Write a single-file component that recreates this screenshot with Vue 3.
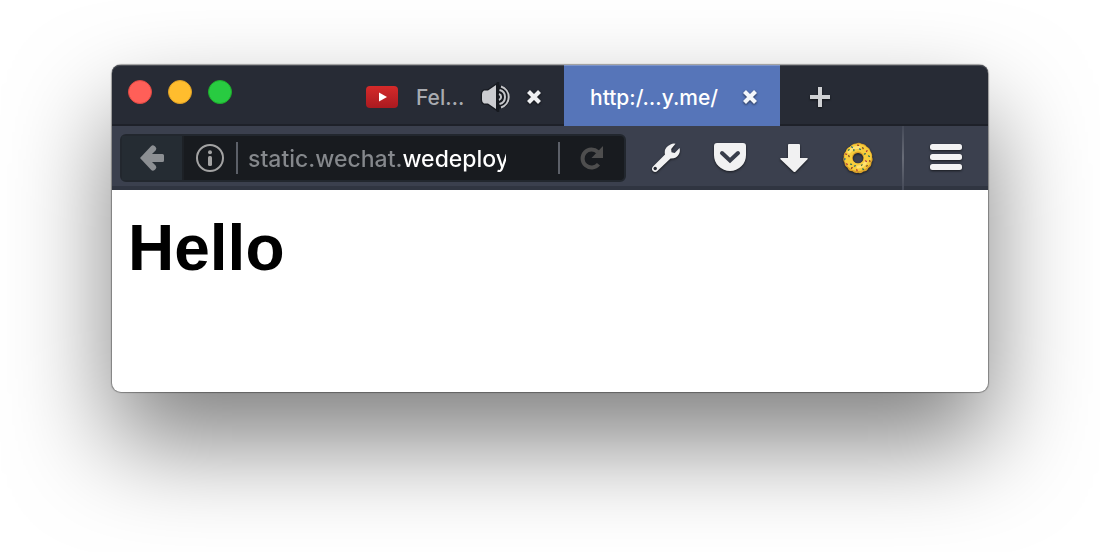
<script setup>
import { ref } from 'vue'

const address = ref('static.wechat.wedeploy.me')

// x, y, rotation and colour of each sprinkle on the donut
const sprinkles = [
  [10, 5, 40, '#2b6e88'], [16, 3, 10, '#9b3a2c'], [21, 6, 60, '#7a4a2a'], [25, 9, 120, '#b23b3b'],
  [27, 14, 30, '#2f6f5a'], [28, 19, 80, '#8a3d2a'], [25, 24, 150, '#7a4a2a'], [21, 27, 20, '#2f6f5a'],
  [15, 28, 70, '#b23b3b'], [10, 26, 130, '#8a3d2a'], [5, 22, 50, '#b23b3b'], [3, 17, 100, '#2b6e88'],
  [4, 12, 20, '#b2463b'], [7, 8, 140, '#3a7f4a'], [12, 8, 90, '#2f6f5a'], [18, 7, 30, '#286b7c'],
  [23, 12, 160, '#2f6f5a'], [24, 19, 40, '#b23b3b'], [20, 23, 120, '#5b7a3a'], [9, 22, 10, '#2f6f5a'],
  [7, 14, 60, '#7a4a2a'], [13, 24, 150, '#286b7c']
]
</script>

<template>
  <div class="desktop">
    <section class="window" aria-label="Browser window">
      <header class="tabbar">
        <div class="lights">
          <button class="light red" aria-label="Close window"></button>
          <button class="light amber" aria-label="Minimize window"></button>
          <button class="light green" aria-label="Zoom window"></button>
        </div>
        <div class="tab muted">
          <svg class="tube" width="32" height="22" viewBox="0 0 32 22" aria-hidden="true">
            <defs>
              <linearGradient id="tube" x1="0" y1="0" x2="0" y2="1">
                <stop offset="0" stop-color="#d52a2a" /><stop offset="1" stop-color="#aa1a20" />
              </linearGradient>
            </defs>
            <rect width="32" height="22" rx="4" fill="url(#tube)" />
            <path d="M13 6.500 21 11l-8 4.500z" fill="#fff" />
          </svg>
          <span class="title">Fel…</span>
          <button class="icon sound" aria-label="Mute tab">
            <svg width="30" height="32" viewBox="0 0 30 32">
              <path d="M4 9.500h4L16 4v24l-8-5.500H4q-2-1-2-3.500v-6q0-2.500 2-3.500z" fill="#cbccd0" stroke="#171a20" stroke-width="2.500" paint-order="stroke" />
              <path d="M19 4.500a11.500 11.500 0 0 1 0 23z" fill="#171a20" />
              <path d="M18 1v30" stroke="#171a20" stroke-width="2.500" />
              <g fill="none" stroke="#c5c6ca" stroke-width="2">
                <path d="M19 13a3.200 3.200 0 0 1 0 6" />
                <path d="M19.500 9a7.200 7.200 0 0 1 0 14" />
                <path d="M21 5.500a11 11 0 0 1 0 21" />
              </g>
            </svg>
          </button>
          <button class="icon close" aria-label="Close tab">
            <svg width="16" height="16" viewBox="0 0 16 16"><path d="m2.500 2.500 11 11M13.500 2.500l-11 11" stroke="#eff0f2" stroke-width="4.200" /></svg>
          </button>
        </div>
        <div class="tab active">
          <span class="title">http:/…y.me/</span>
          <button class="icon close" aria-label="Close tab">
            <svg width="16" height="16" viewBox="0 0 16 16"><path d="m2.500 2.500 11 11M13.500 2.500l-11 11" stroke="#f3f6fb" stroke-width="4.200" /></svg>
          </button>
        </div>
        <button class="icon plus" aria-label="New tab">
          <svg width="20" height="20" viewBox="0 0 20 20"><path d="M10 0v20M0 10h20" stroke="#d0d1d4" stroke-width="4" /></svg>
        </button>
      </header>

      <nav class="toolbar">
        <div class="location">
          <button class="icon back" aria-label="Back">
            <svg width="26" height="28" viewBox="0 0 26 28">
              <path d="M1 14 12 2.200q1.800-1.800 3.600-.2l1 1q1.600 1.700 0 3.400L13 10h10.500q1.500 0 1.500 1.500v5q0 1.500-1.500 1.500H13l3.600 3.600q1.600 1.700 0 3.400l-1 1q-1.800 1.600-3.600-.2z" fill="#8c8f93" />
            </svg>
          </button>
          <button class="icon info" aria-label="Site information">
            <svg width="28" height="28" viewBox="0 0 28 28">
              <circle cx="14" cy="14" r="13" fill="none" stroke="#a3a3a3" stroke-width="2" />
              <circle cx="14" cy="8.300" r="2" fill="#a3a3a3" /><rect x="12" y="12" width="4" height="10" rx="1.500" fill="#a3a3a3" />
            </svg>
          </button>
          <span class="bar"></span>
          <input v-model="address" class="address" type="text" aria-label="Address" spellcheck="false">
          <span class="bar"></span>
          <button class="icon reload" aria-label="Reload">
            <svg width="24" height="26" viewBox="0 0 24 26">
              <path d="M18.500 19.300A9 9 0 1 1 17.800 7" fill="none" stroke="#4e4e4e" stroke-width="4" />
              <path d="M23 1v12H11.500z" fill="#4e4e4e" />
            </svg>
          </button>
        </div>
        <div class="actions">
          <button class="icon" aria-label="Developer tools">
            <svg width="32" height="32" viewBox="0 0 32 32">
              <path d="M20.500 2.500q2.500-1.500 5-.8l-4.300 5.300.3 3.200 3.200.8 4.800-5q1 3-.5 6-2.500 4.800-8.500 4.500L7.600 28.800q-2.300 2.200-4.700.3-2-2.300.1-4.700L15 12.500Q13.500 5.500 20.500 2.500z" fill="#f1f1f2" />
              <circle cx="5.200" cy="26.500" r="1.700" fill="#252932" />
            </svg>
          </button>
          <button class="icon" aria-label="Save to Pocket">
            <svg width="32" height="32" viewBox="0 0 32 32">
              <path d="M3 1h26q3 0 3 3v9q0 7-4.700 11.300Q22.500 29 16 29T4.700 24.300Q0 20 0 13V4q0-3 3-3z" fill="#f1f1f2" />
              <path d="m8 11 8 7.500 8-7.500" fill="none" stroke="#383d4a" stroke-width="4" stroke-linecap="round" />
            </svg>
          </button>
          <button class="icon" aria-label="Downloads">
            <svg width="32" height="32" viewBox="0 0 32 32"><path d="M10 3q0-1 1-1h10q1 0 1 1v13h7q1.500 0 .5 1.300L17.600 29.500q-1.100 1.100-2.200 0L2.500 17.300Q1.500 16 3 16h7z" fill="#f1f1f2" /></svg>
          </button>
          <button class="icon" aria-label="Donut">
            <svg width="32" height="32" viewBox="0 0 32 32">
              <path fill-rule="evenodd" d="M14 1.500q3-1.500 5.500.2 3.500 0 5 2.800 3.500 1.500 4 5 2.300 2.500 1.500 5.500 1.500 3-.5 5.500 0 4-3 5.500-1.500 3.500-5 3.500-2.500 2.500-5.500 1.200-3 1-5.500-1.500-4 0-5-3.500-3-1.700-3-5-2-2.700-.7-5.700-.7-3.500 2-5.500.7-3.700 4.200-4.500Q10 1.500 14 1.500zM16 11a5.300 5.300 0 1 0 .1 0z" fill="#daa12a" />
              <circle cx="16" cy="15.500" r="9.800" fill="none" stroke="#f7cd3c" stroke-width="7.500" />
              <path d="M7 10q4-5 10-4.500M24 20q-3 5-8 5" fill="none" stroke="#ffe274" stroke-width="3" stroke-linecap="round" />
              <rect v-for="(s, i) in sprinkles" :key="i" :x="s[0] - 1" :y="s[1] - 0.5" width="2.200" height="1.300" rx=".5" :fill="s[3]" :transform="`rotate(${s[2]} ${s[0]} ${s[1]})`" />
            </svg>
          </button>
        </div>
        <div class="menu">
          <button class="icon" aria-label="Open menu">
            <svg width="32" height="28" viewBox="0 0 32 28"><g fill="#f3f3f4"><rect y="1" width="32" height="6" rx="2.500" /><rect y="11" width="32" height="6" rx="2.500" /><rect y="21" width="32" height="6" rx="2.500" /></g></svg>
          </button>
        </div>
      </nav>

      <main class="page">
        <h1>Hello</h1>
      </main>
    </section>
  </div>
</template>

<style>
body {
  background: #fff;
}
</style>

<style scoped>
* {
  box-sizing: border-box;
}

.desktop {
  padding: 65px 112px 160px;
  height: 100vh;
  overflow: hidden;
  font-family: Inter, "Liberation Sans", sans-serif;
}

.window {
  border-radius: 9px;
  background: #fff;
  box-shadow: 0 0 1px 1px rgba(0, 0, 0, 0.35), 0 50px 100px rgba(0, 0, 0, 0.5);
}

.icon {
  display: flex;
  align-items: center;
  justify-content: center;
  flex: none;
  padding: 0;
  border: 0;
  background: none;
}

.icon svg {
  display: block;
}

.tabbar {
  display: flex;
  height: 61px;
  background: #272b35;
  box-shadow: inset 0 1px #4b4e56, inset 0 -2px #1e2129;
  border-radius: 8px 8px 0 0;
}

.lights {
  display: flex;
  gap: 16px;
  padding: 15px 16px;
}

.light {
  width: 24px;
  height: 24px;
  padding: 0;
  border: 1px solid;
  border-radius: 50%;
}

.red {
  background: #ff5f58;
  border-color: #df4842;
}

.amber {
  background: #ffbd2e;
  border-color: #dea025;
}

.green {
  background: #28cb41;
  border-color: #1dad2b;
}

.tab {
  display: flex;
  align-items: center;
  width: 216px;
  padding-right: 22px;
  font-size: 21px;
  font-weight: 500;
  line-height: 28px;
}

.title {
  flex: 1;
  padding-top: 4px;
  white-space: nowrap;
}

.muted {
  margin-left: auto;
  padding-left: 18px;
  color: #a9abb1;
}

.tube {
  margin-top: 2px;
  margin-right: 18px;
}

.sound {
  margin-top: 2px;
  margin-right: 16px;
}

.close {
  margin-top: 2px;
  filter: drop-shadow(0 1px 1px rgba(0, 0, 0, 0.6));
}

.active {
  padding-left: 26px;
  background: #5675b9;
  box-shadow: inset 0 1px #7c94ca;
  color: #fff;
}

.plus {
  width: 80px;
  margin-top: 2px;
  margin-right: 128px;
  filter: drop-shadow(0 1px 1px rgba(0, 0, 0, 0.6));
}

.toolbar {
  display: flex;
  height: 64px;
  background: #3b404e;
  box-shadow: inset 0 -4px #303541;
}

.location {
  display: flex;
  align-items: center;
  flex: 1;
  min-width: 0;
  height: 48px;
  margin: 8px 0 8px 8px;
  border: 2px solid #22272e;
  border-radius: 6px;
  background: #181b1f;
}

.back {
  align-self: stretch;
  width: 62px;
  border-right: 2px solid #1d2126;
  background: #252c33;
}

.info {
  margin: 0 12px;
}

.bar {
  flex: none;
  width: 2px;
  height: 32px;
  background: #5c6068;
}

.address {
  flex: 1;
  min-width: 0;
  margin: 0 52px 0 10px;
  padding: 2px 0 0;
  border: 0;
  outline: 0;
  background: linear-gradient(to right, #85888c 155px, #fff 155px);
  background-clip: text;
  color: transparent;
  font: inherit;
  font-size: 23px;
  font-weight: 500;
  line-height: 32px;
}

.reload {
  width: 64px;
}

.actions {
  display: flex;
  align-items: center;
  gap: 32px;
  padding: 0 28px 0 24px;
}

.actions .icon,
.menu .icon {
  filter: drop-shadow(0 1px 1px rgba(0, 0, 0, 0.6));
}

.menu {
  display: flex;
  align-items: center;
  width: 86px;
  padding: 0 0 2px 26px;
  border-left: 2px solid;
  border-image: linear-gradient(#444957, #686c77 50%, #444957) 1;
}

.page {
  min-height: 202px;
  padding: 18px 16px;
}

h1 {
  margin: 0;
  color: #000;
  font: bold 64px/80px "Liberation Sans", Arial, sans-serif;
}
</style>
